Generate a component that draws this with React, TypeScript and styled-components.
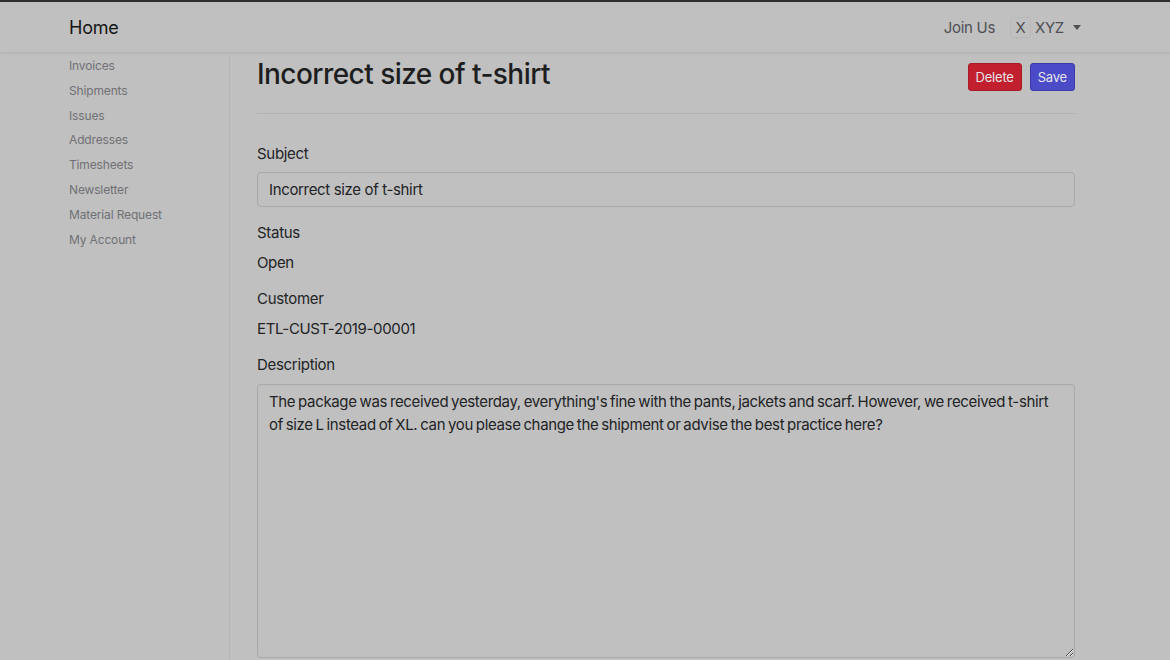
import React from "react";
import styled, { createGlobalStyle } from "styled-components";

const GlobalStyle = createGlobalStyle`
  html, body {
    margin: 0;
    padding: 0;
    background: #c0c0c0;
    font-family: Inter, "Noto Sans", "Liberation Sans", sans-serif;
    color: #1e1f21;
  }
  * { box-sizing: border-box; }
`;

const Page = styled.div`
  width: 1170px;
  height: 660px;
  overflow: hidden;
  background: #c0c0c0;
  border-top: 2px solid #2e2e2e;
`;

const Navbar = styled.header`
  height: 51px;
  display: flex;
  align-items: center;
  justify-content: space-between;
  padding: 0 89px 0 69px;
  border-bottom: 1px solid #b6b6b6;
  box-shadow: 0 1px 2px rgba(0, 0, 0, 0.06);
`;

const Brand = styled.a`
  font-size: 18px;
  letter-spacing: -0.2px;
  color: #151617;
  text-decoration: none;
`;

const NavRight = styled.div`
  display: flex;
  align-items: center;
  gap: 6px;
  font-size: 15px;
  letter-spacing: -0.3px;
  color: #4f5054;
`;

const NavLink = styled.span`
  margin-right: 9px;
`;

const Avatar = styled.span`
  display: inline-flex;
  align-items: center;
  justify-content: center;
  width: 21px;
  height: 21px;
  border: 1px solid #b8b8b8;
  border-radius: 3px;
  font-size: 15px;
  color: #4f5054;
`;

const Dropdown = styled.span`
  display: flex;
  align-items: center;
  margin-left: -2px;
`;

const Caret = styled.span`
  width: 0;
  height: 0;
  margin-left: 9px;
  border-left: 4px solid transparent;
  border-right: 4px solid transparent;
  border-top: 5px solid #4f5054;
`;

const Body = styled.div`
  display: flex;
  height: 607px;
`;

const Sidebar = styled.nav`
  width: 230px;
  flex-shrink: 0;
  border-right: 1px solid #b5b5b5;
  padding: 1px 0 0 69px;
  display: flex;
  flex-direction: column;
`;

const SideItem = styled.a`
  font-size: 12px;
  letter-spacing: -0.15px;
  line-height: 24.8px;
  color: #707175;
  text-decoration: none;
`;

const Main = styled.main`
  flex: 1;
  padding: 0 95px 0 27px;
  display: flex;
  flex-direction: column;
`;

const Header = styled.div`
  display: flex;
  justify-content: space-between;
  align-items: flex-start;
  padding: 3px 0 21px;
  border-bottom: 1px solid #b2b2b2;
`;

const Title = styled.h1`
  margin: 0;
  font-size: 28px;
  font-weight: 500;
  line-height: 36px;
  color: #1d1e20;
  letter-spacing: -0.55px;
`;

const Actions = styled.div`
  display: flex;
  gap: 8px;
  margin-top: 7px;
`;

const Button = styled.button<{ $variant: "danger" | "primary" }>`
  height: 28px;
  padding: 0 7px;
  font-family: inherit;
  font-size: 13px;
  letter-spacing: -0.2px;
  color: #e4e4e8;
  border-radius: 3px;
  border: 1px solid ${(p) => (p.$variant === "danger" ? "#a81c2a" : "#3a3aa8")};
  background: ${(p) => (p.$variant === "danger" ? "#c2202f" : "#4b4bc8")};
`;

const Form = styled.div`
  display: flex;
  flex-direction: column;
  padding-top: 29px;
`;

const Label = styled.label`
  font-size: 15px;
  letter-spacing: -0.3px;
  line-height: 22px;
  color: #222325;
`;

const Input = styled.div`
  margin: 7px 0 15px;
  height: 35px;
  padding: 0 11px;
  display: flex;
  align-items: center;
  font-size: 15px;
  letter-spacing: -0.35px;
  border: 1px solid #a9a9a9;
  border-radius: 4px;
  color: #222325;
`;

const Value = styled.div`
  font-size: 15px;
  letter-spacing: -0.35px;
  line-height: 22px;
  margin: 8px 0 14px;
  color: #222325;
`;

const TextArea = styled.textarea`
  margin-top: 8px;
  height: 274px;
  resize: vertical;
  padding: 5px 11px;
  font-family: inherit;
  font-size: 15px;
  letter-spacing: -0.35px;
  word-spacing: -1px;
  line-height: 23px;
  color: #222325;
  background: transparent;
  border: 1px solid #a9a9a9;
  border-radius: 4px;
  outline: none;
`;

const sideItems = [
  "Invoices",
  "Shipments",
  "Issues",
  "Addresses",
  "Timesheets",
  "Newsletter",
  "Material Request",
  "My Account",
];

export default function App() {
  return (
    <>
      <GlobalStyle />
      <Page>
        <Navbar>
          <Brand>Home</Brand>
          <NavRight>
            <NavLink>Join Us</NavLink>
            <Avatar>X</Avatar>
            <Dropdown>
              XYZ
              <Caret />
            </Dropdown>
          </NavRight>
        </Navbar>
        <Body>
          <Sidebar>
            {sideItems.map((item) => (
              <SideItem key={item}>{item}</SideItem>
            ))}
          </Sidebar>
          <Main>
            <Header>
              <Title>Incorrect size of t-shirt</Title>
              <Actions>
                <Button $variant="danger">Delete</Button>
                <Button $variant="primary">Save</Button>
              </Actions>
            </Header>
            <Form>
              <Label>Subject</Label>
              <Input>Incorrect size of t-shirt</Input>
              <Label>Status</Label>
              <Value>Open</Value>
              <Label>Customer</Label>
              <Value>ETL-CUST-2019-00001</Value>
              <Label>Description</Label>
              <TextArea
                readOnly
                defaultValue="The package was received yesterday, everything's fine with the pants, jackets and scarf. However, we received t-shirt of size L instead of XL. can you please change the shipment or advise the best practice here?"
              />
            </Form>
          </Main>
        </Body>
      </Page>
    </>
  );
}
